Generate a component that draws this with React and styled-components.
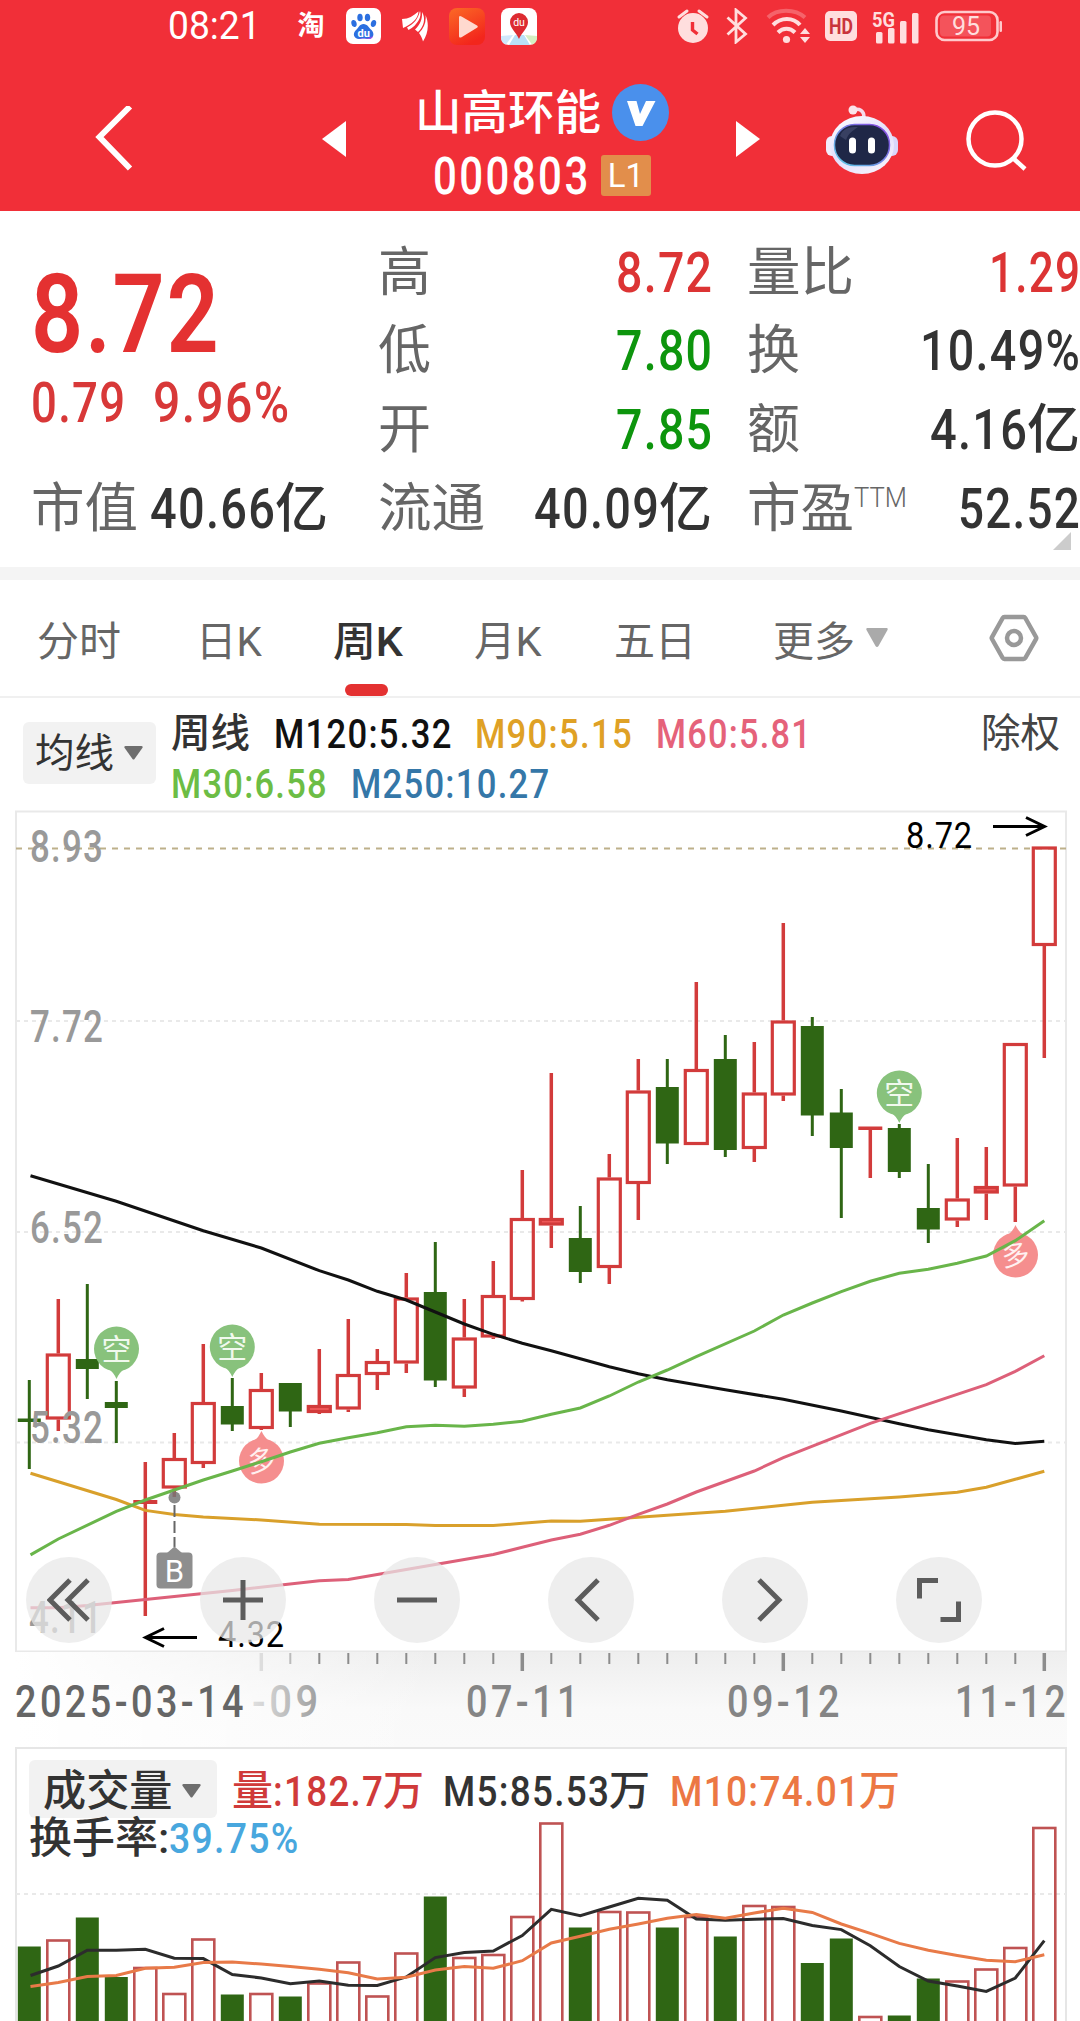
import { useLayoutEffect, useRef } from "react";
import styled, { createGlobalStyle } from "styled-components";

const UP = "#d23b3b";
const DOWN = "#2f6614";
const STEP = 29;
const FIRST_X = 29.3;

const cx = (i) => FIRST_X + i * STEP;

// direction, high, body top, body bottom, low
const candles = [
  ["d", 1380, 1418.5, 1422, 1469],
  ["u", 1299, 1353.5, 1419.5, 1431],
  ["d", 1284, 1359, 1369, 1399],
  ["d", 1381, 1402, 1408, 1443],
  ["u", 1462, 1500, 1504, 1616],
  ["u", 1433, 1458, 1488.5, 1497],
  ["u", 1344, 1402, 1464, 1468],
  ["d", 1378, 1406, 1424.5, 1431],
  ["u", 1373, 1389, 1429, 1430],
  ["d", 1383, 1383, 1411.5, 1427],
  ["u", 1349, 1405, 1413, 1414],
  ["u", 1319, 1374, 1409.5, 1412],
  ["u", 1349, 1361, 1375, 1390],
  ["u", 1273, 1297.5, 1363.5, 1373],
  ["d", 1242, 1292, 1380.5, 1387],
  ["u", 1299, 1337.5, 1388.5, 1397],
  ["u", 1261, 1295, 1337.5, 1339],
  ["u", 1170, 1218, 1300, 1301.5],
  ["u", 1073, 1218, 1225.5, 1248],
  ["d", 1206, 1238, 1272, 1283],
  ["u", 1154, 1177.5, 1268, 1284],
  ["u", 1059, 1090.5, 1184, 1220],
  ["d", 1059, 1087, 1143.5, 1164],
  ["u", 982, 1069, 1145, 1145],
  ["d", 1035, 1059, 1150, 1157],
  ["u", 1042, 1092.5, 1149, 1162],
  ["u", 923, 1020.5, 1095.5, 1101],
  ["d", 1017, 1026, 1115.5, 1136],
  ["d", 1089, 1112.5, 1148, 1218],
  ["u", 1127, 1126.5, 1130, 1178],
  ["d", 1124, 1128, 1172, 1178],
  ["d", 1164, 1208, 1229.5, 1243],
  ["u", 1138, 1198.5, 1220.5, 1227],
  ["u", 1147, 1186, 1193.5, 1220],
  ["u", 1043, 1043, 1186.5, 1222],
  ["u", 847, 846.5, 946, 1058],
];

const ma120 = [
  [0, 1175.7], [3, 1201.3], [6, 1230.7], [8, 1248], [10, 1270.7], [11, 1280],
  [12, 1291.3], [13, 1300], [14, 1312], [15, 1324], [16, 1334.3], [17, 1343.3],
  [18, 1350.7], [19, 1358.7], [20, 1366.7], [21, 1373.7], [22, 1379.7],
  [24, 1389.7], [26, 1399.3], [28, 1411], [30, 1423.7], [31, 1429.7],
  [33, 1439.7], [34, 1443.5], [35, 1441.3],
];

const ma30 = [
  [0, 1554.9], [1, 1539], [3, 1511.4], [4, 1500], [5, 1490], [6, 1480],
  [7, 1471], [8, 1461.7], [9, 1452], [10, 1443.3], [11, 1437.7], [12, 1432.7],
  [13, 1426.7], [14, 1425.3], [15, 1426.3], [16, 1424.3], [17, 1421.3],
  [18, 1414.3], [19, 1408], [20, 1396], [21, 1382], [22, 1370], [23, 1356.7],
  [25, 1331], [26, 1315], [27, 1303], [28, 1291.7], [29, 1281.3],
  [30, 1273.3], [31, 1269.3], [32, 1263.3], [33, 1256], [34, 1240.7],
  [35, 1220.7],
];

const ma90 = [
  [0, 1473.3], [3, 1499.5], [4, 1510.4], [5, 1514.5], [6, 1517], [8, 1520],
  [10, 1524.2], [13, 1524.5], [14, 1525.5], [16, 1525.5], [17, 1523.3],
  [18, 1521], [19, 1521.3], [21, 1517.3], [24, 1511.3], [26, 1505.3],
  [27, 1502.3], [30, 1497], [32, 1492.3], [33, 1487.3], [34, 1479.3],
  [35, 1471.3],
];

const ma60 = [
  [0, 1607.7], [1, 1607.7], [2, 1605.6], [4, 1599.4], [7, 1590.4],
  [10, 1580.8], [11, 1579.4], [12, 1574.6], [16, 1554.5], [17, 1547.3],
  [18, 1540], [19, 1534.3], [20, 1525.3], [21, 1514.3], [22, 1504],
  [23, 1492], [25, 1471], [26, 1457.7], [29, 1423.3], [33, 1384.7],
  [34, 1371.3], [35, 1355.7],
];

// top of every volume bar, in the order of the candles
const volumes = [
  1946.5, 1939.5, 1917.5, 1977, 1967, 1993, 1938.5, 1994.5, 1993, 1996.5,
  1982.5, 1961.5, 1995.5, 1952.5, 1896.5, 1957, 1954, 1916, 1822.5, 1927.5,
  1911, 1911.5, 1927.5, 1916, 1936.5, 1905, 1906, 1963, 1938.5, 2016, 2015.5,
  1978.5, 1980.5, 1968.5, 1947, 1827,
];

const vol5 = [
  1975.5, 1966, 1950.3, 1950.3, 1949.3, 1958.3, 1958.6, 1974.5, 1978, 1983.8,
  1981, 1985.2, 1985.5, 1977, 1957.6, 1952.4, 1951, 1935.5, 1909.3, 1915.8,
  1907, 1898.2, 1900.3, 1919, 1920.3, 1919.3, 1918.6, 1925.5, 1929.6, 1945.8,
  1966.5, 1981, 1986, 1991.4, 1978, 1940.7,
];

const vol10 = [
  1986.6, 1982.4, 1976.6, 1975.5, 1968.3, 1967.2, 1962.4, 1962, 1964, 1966.5,
  1969.3, 1972.8, 1979, 1977.2, 1970, 1966.5, 1968.3, 1960.7, 1943, 1936.2,
  1929.3, 1924, 1918.2, 1914.4, 1918.2, 1913, 1908.2, 1912.4, 1924, 1933.4,
  1943.4, 1950.3, 1955.5, 1960.3, 1961.7, 1954.8,
];

const toPoints = (list) =>
  list.map(([i, y]) => `${i === 0 ? 30.5 : cx(i)},${y}`).join(" ");

// Text squeezed sideways to a given width, for the narrow numerals
const FitText = ({ w, size, weight, color, spacing = 0, children }) => {
  const ref = useRef(null);

  useLayoutEffect(() => {
    const el = ref.current;
    el.style.transform = `scaleX(${w / (el.offsetWidth - spacing)})`;
  }, [w, spacing, children]);

  return (
    <FitBox $w={w} $size={size} $weight={weight} $color={color} $spacing={spacing}>
      <FitInner ref={ref}>{children}</FitInner>
    </FitBox>
  );
};

const ChartText = ({
  x,
  y,
  w,
  size = 43.5,
  fill = "#999",
  weight = 500,
  spacing = 0,
  children,
}) => (
  <text
    x={x}
    y={y}
    textLength={w}
    lengthAdjust="spacingAndGlyphs"
    fontSize={size}
    fontWeight={weight}
    letterSpacing={spacing}
    fill={fill}
  >
    {children}
  </text>
);

const StatusBar = () => (
  <Status>
    <FitText w={93} size={38} weight={400}>08:21</FitText>
    <AppIcons>
      <AppSlot>
        <TaoMark>淘</TaoMark>
      </AppSlot>
      <AppSlot>
        <svg width="35" height="36" viewBox="0 0 35 36">
          <rect width="35" height="36" rx="7" fill="#fff" />
          <g fill="#2b6fe0">
            <ellipse cx="8" cy="15.500" rx="2.600" ry="3.600" transform="rotate(-15 8 15.500)" />
            <ellipse cx="14" cy="9.500" rx="2.700" ry="3.800" />
            <ellipse cx="21.500" cy="9.500" rx="2.700" ry="3.800" />
            <ellipse cx="27.500" cy="15.500" rx="2.600" ry="3.600" transform="rotate(15 27.500 15.500)" />
            <path d="M17.500 16c-4 0-5 4-7.500 6-4 3.500-2 9 3 9 2 0 3-.5 4.500-.5s3 .5 5 .5c5 0 6.500-5.500 3-9-2.500-2-4-6-8-6z" />
          </g>
          <path d="M12 30c5 2 10 1 15-2-1 3-3 3-6 3z" fill="#9a4be8" />
          <text x="17.800" y="28.500" fontSize="11" fontWeight="700" fill="#fff" textAnchor="middle">du</text>
        </svg>
      </AppSlot>
      <AppSlot>
        <svg width="28" height="32" viewBox="0 0 28 32" fill="#fff">
          <path d="M1 9C8 9 12 6 17.500 1.500 17 9 11 14 2 18z" />
          <path d="M19 1c2 5-2 14-11.500 19L6 17.500C13 14 17 9 19 1z" />
          <path d="M21 2c4 6 2 15-4 20l-3-2.500C19 15 21.500 9 21 2z" />
          <path d="M24.500 5c4 9 2.500 19-2.500 26.500-1-3.500-2-6-4-8.500C23 18 25.500 12 24.500 5z" />
        </svg>
      </AppSlot>
      <AppSlot>
        <svg width="36" height="37" viewBox="0 0 36 37">
          <defs>
            <linearGradient id="play" x1="0" y1="0" x2="0.500" y2="1">
              <stop offset="0" stopColor="#fb6a26" />
              <stop offset="1" stopColor="#f3261c" />
            </linearGradient>
          </defs>
          <rect width="36" height="37" rx="8" fill="url(#play)" />
          <path d="M10 9.500c0-1.500 1-2 2.500-1l15.500 9c1 .6 1 1.500 0 2.200l-15.500 9.500c-1.500.8-2.500.3-2.500-1.200z" fill="#ffd9cf" />
        </svg>
      </AppSlot>
      <AppSlot>
        <svg width="36" height="37" viewBox="0 0 36 37">
          <rect width="36" height="37" rx="8" fill="#fff" />
          <path d="M0 28l12-1-7 9.500C2 36 0 33 0 30z" fill="#cfe8fb" />
          <path d="M14 27h9l6 10H8z" fill="#b9e0f7" />
          <path d="M24 27l12 1v2c0 3-2 6-5 6.500z" fill="#d5efc2" />
          <path d="M18 31C15 24 9 20 9 14a9 9 0 0 1 18 0c0 6-6 10-9 17z" fill="#dd2b31" />
          <text x="18" y="18" fontSize="10.500" fill="#fff" textAnchor="middle">du</text>
        </svg>
      </AppSlot>
    </AppIcons>

    <Signals>
      <svg width="34" height="36" viewBox="0 0 34 36">
        <circle cx="17" cy="20" r="15" fill="#ffdede" />
        <path d="M3 9l8-6M31 9l-8-6" stroke="#ffdede" strokeWidth="3" strokeLinecap="round" />
        <path d="M16.500 14v8l5 4" fill="none" stroke="#f12f38" strokeWidth="3.400" />
      </svg>
      <svg width="26" height="36" viewBox="0 0 26 36" fill="none" stroke="#ffdede" strokeWidth="2.800">
        <path d="M3.500 9.500L21.500 26l-9.500 8V2l9.500 8L3.500 26.500" />
      </svg>
      <svg width="47" height="36" viewBox="0 0 47 36" fill="none" strokeWidth="4">
        <path d="M4 9.500c9-9 27-9 37 0" stroke="#f5636a" />
        <path d="M9 17c8-8 20-8 27 0" stroke="#ffdede" />
        <path d="M14 24.500c5-5 12-5 17 0" stroke="#ffdede" />
        <circle cx="22.500" cy="31.500" r="3.600" fill="#ffdede" />
        <path d="M36 26l5-6 5 6zM36 29l5 6 5-6z" fill="#ffdede" />
      </svg>
      <HdMark>
        <FitText w={24} size={22} weight={700}>HD</FitText>
      </HdMark>
      <svg width="50" height="36" viewBox="0 0 50 36" fill="#ffdede">
        <rect x="5" y="24" width="6.500" height="11.500" rx="1.500" />
        <rect x="17" y="20" width="6.500" height="15.500" rx="1.500" />
        <rect x="29" y="13" width="6.500" height="22.500" rx="1.500" />
        <rect x="41" y="5" width="6.500" height="30.500" rx="1.500" />
        <text x="1" y="18.500" fontSize="21" fontWeight="700" textLength="23" lengthAdjust="spacingAndGlyphs">5G</text>
      </svg>
      <svg width="68" height="32" viewBox="0 0 68 32">
        <rect x="1.500" y="2" width="61" height="28" rx="8" fill="none" stroke="#ffc9cb" strokeWidth="2.600" />
        <rect x="5" y="5.500" width="51" height="21" rx="4" fill="#f4535b" />
        <rect x="64.500" y="11" width="2.500" height="11" rx="1.200" fill="#ffc9cb" />
        <text x="31" y="25" fontSize="25" fill="#ffdede" textAnchor="middle">95</text>
      </svg>
    </Signals>
  </Status>
);

const TitleBar = () => (
  <Nav>
    <NavItem $left={95}>
      <svg width="38" height="66" viewBox="0 0 38 66" fill="none" stroke="#fff" strokeWidth="6">
        <path d="M35 0.500L4.500 31 35 62.500" />
      </svg>
    </NavItem>
    <NavItem $left={189}>
      <svg width="24" height="36" viewBox="0 0 24 36">
        <path d="M0 18L24 0v36z" fill="#fff" />
      </svg>
    </NavItem>
    <Titles>
      <NameRow>
        <FitText w={186} size={46.5} weight={500}>山高环能</FitText>
        <VBadge>
          <svg width="30" height="26" viewBox="0 0 30 26">
            <path d="M1 0h9.500l3.500 13L20 0h9.500L16.500 25h-7z" fill="#fff" />
          </svg>
        </VBadge>
      </NameRow>
      <CodeRow>
        <FitText w={155} size={52} weight={500} spacing={3}>000803</FitText>
        <LevelBadge>L1</LevelBadge>
      </CodeRow>
    </Titles>
    <NavItem $left={67}>
      <svg width="24" height="36" viewBox="0 0 24 36">
        <path d="M24 18L0 0v36z" fill="#fff" />
      </svg>
    </NavItem>
    <NavItem $left={65}>
      <svg width="74" height="72" viewBox="0 0 74 72">
        <defs>
          <linearGradient id="shell" x1="0" y1="0" x2="0.600" y2="1">
            <stop offset="0" stopColor="#fff" />
            <stop offset="0.600" stopColor="#e3defb" />
            <stop offset="1" stopColor="#f3effb" />
          </linearGradient>
          <linearGradient id="rim" x1="0" y1="1" x2="1" y2="0">
            <stop offset="0" stopColor="#5ccfe6" />
            <stop offset="1" stopColor="#8a3ee0" />
          </linearGradient>
        </defs>
        <path d="M28 7c7-2 11 1 11 7" fill="none" stroke="#f6d9ea" strokeWidth="3.500" />
        <circle cx="28" cy="7" r="4.500" fill="#fbe3ea" />
        <rect x="1" y="33" width="12" height="20" rx="6" fill="#f2ecfc" />
        <rect x="61" y="33" width="12" height="20" rx="6" fill="#d9d6fa" />
        <ellipse cx="37" cy="42" rx="32" ry="29" fill="url(#shell)" />
        <rect x="9.500" y="21.500" width="55" height="41" rx="20" fill="#1f2747" stroke="url(#rim)" strokeWidth="1.500" />
        <path d="M15 33c3-8 9-9 18-9-6 4-10 7-12 13z" fill="#4a5174" opacity="0.600" />
        <rect x="24" y="34.500" width="7" height="16" rx="3.500" fill="#fff" />
        <rect x="43" y="34.500" width="7" height="16" rx="3.500" fill="#fff" />
      </svg>
    </NavItem>
    <NavItem $left={66}>
      <svg width="62" height="64" viewBox="0 0 62 64" fill="none" stroke="#fff" strokeWidth="4.500">
        <circle cx="30" cy="32" r="26.500" />
        <path d="M48.500 51.500L60 62" />
      </svg>
    </NavItem>
  </Nav>
);

const Value = ({ w, color = "#333", unit, children }) => (
  <ValueBox>
    <FitText w={w} size={55} weight={500} color={color} spacing={1.5}>{children}</FitText>
    {unit && <FitText w={53} size={53} weight={500} color={color}>{unit}</FitText>}
  </ValueBox>
);

const Label = ({ w = 53, children }) => (
  <FitText w={w} size={53} weight={400} color="#666">{children}</FitText>
);

const QuotePanel = () => (
  <Quote>
    <PriceBlock>
      <Price>
        <FitText w={188} size={108.500} weight={600} spacing={2}>8.72</FitText>
      </Price>
      <Change>
        <FitText w={94} size={55} weight={500} spacing={1.5}>0.79</FitText>
        <FitText w={136} size={55} weight={500} spacing={1.5}>9.96%</FitText>
      </Change>
    </PriceBlock>
    <Stat $w={334}>
      <Label>高</Label>
      <Value w={96} color="#dc3434">8.72</Value>
    </Stat>
    <Stat $w={333}>
      <Label w={107}>量比</Label>
      <Value w={91} color="#dc3434">1.29</Value>
    </Stat>
    <Stat $w={334}>
      <Label>低</Label>
      <Value w={96} color="#0d950d">7.80</Value>
    </Stat>
    <Stat $w={333}>
      <Label>换</Label>
      <Value w={160}>10.49%</Value>
    </Stat>
    <Stat $w={334}>
      <Label>开</Label>
      <Value w={96} color="#0d950d">7.85</Value>
    </Stat>
    <Stat $w={333}>
      <Label>额</Label>
      <Value w={97} unit="亿">4.16</Value>
    </Stat>
    <Stat $w={297}>
      <Label w={107}>市值</Label>
      <Value w={125} unit="亿">40.66</Value>
    </Stat>
    <Stat $w={334}>
      <Label w={107}>流通</Label>
      <Value w={125} unit="亿">40.09</Value>
    </Stat>
    <Stat $w={333}>
      <PeLabel>
        <Label w={107}>市盈</Label>
        <Ttm>
          <FitText w={53} size={28} weight={300} color="#666">TTM</FitText>
        </Ttm>
      </PeLabel>
      <Value w={122}>52.52</Value>
    </Stat>
    <Corner />
  </Quote>
);

const tabs = [
  { name: "分时", w: 84, left: 37 },
  { name: "日K", w: 66, left: 75 },
  { name: "周K", w: 70, left: 71, active: true },
  { name: "月K", w: 68, left: 71 },
  { name: "五日", w: 82, left: 72 },
  { name: "更多", w: 82, left: 77 },
];

const PeriodTabs = () => (
  <Tabs>
    {tabs.map((tab) => (
      <Tab key={tab.name} $left={tab.left} $active={tab.active}>
        <TabText>
          <FitText w={tab.w} size={41} weight={tab.active ? 500 : 400}>{tab.name}</FitText>
        </TabText>
        {tab.active && <TabLine />}
      </Tab>
    ))}
    <MoreArrow width="22" height="19" viewBox="0 0 22 19">
      <path d="M1.500 0h19c1 0 1.500 1 1 2L12.500 18c-.8 1.200-2.200 1.200-3 0L.5 2C0 1 .5 0 1.500 0z" fill="#aaa" />
    </MoreArrow>
    <Settings width="50" height="48" viewBox="0 0 50 48" fill="none" stroke="#999" strokeWidth="4.500">
      <path d="M15.500 3h19a2 2 0 0 1 1.800 1L47 23a2 2 0 0 1 0 2L36.300 44a2 2 0 0 1-1.800 1h-19a2 2 0 0 1-1.800-1L3 25a2 2 0 0 1 0-2L13.700 4a2 2 0 0 1 1.800-1z" />
      <circle cx="25" cy="24" r="7" />
    </Settings>
  </Tabs>
);

const Caret = () => (
  <svg width="19" height="14" viewBox="0 0 19 14">
    <path d="M1.500 0h16c1 0 1.500 1 1 1.800L10.500 13c-.6.800-1.400.8-2 0L.5 1.800C0 1 .5 0 1.500 0z" fill="#6e6e6e" />
  </svg>
);

const Averages = () => (
  <AverageBar>
    <AverageButton>
      <FitText w={79} size={39.500} weight={400} color="#333">均线</FitText>
      <Caret />
    </AverageButton>
    <Legend>
      <LegendRow>
        <FitText w={79} size={40} weight={500} color="#333">周线</FitText>
        <FitText w={177} size={41} weight={500} color="#111" spacing={1.5}>M120:5.32</FitText>
        <FitText w={157} size={41} weight={500} color="#dfa125" spacing={1.5}>M90:5.15</FitText>
        <FitText w={155} size={41} weight={500} color="#e5627a" spacing={1.5}>M60:5.81</FitText>
      </LegendRow>
      <LegendRow>
        <FitText w={156} size={41} weight={500} color="#6cbd45" spacing={1.5}>M30:6.58</FitText>
        <FitText w={198} size={41} weight={500} color="#3577a8" spacing={1.5}>M250:10.27</FitText>
      </LegendRow>
    </Legend>
    <Adjust>
      <FitText w={79} size={39.500} weight={400} color="#444">除权</FitText>
    </Adjust>
  </AverageBar>
);

const Candle = ({ i, data }) => {
  const [dir, high, top, bottom, low] = data;
  const x = cx(i);

  if (dir === "d") {
    return (
      <g fill={DOWN}>
        <rect x={x - 1.500} y={high} width="3" height={low - high} />
        <rect x={x - 11.500} y={top} width="23" height={bottom - top} />
      </g>
    );
  }

  const h = bottom - top;
  return (
    <g fill={UP}>
      <rect x={x - 1.750} y={high} width="3.500" height={Math.max(top - high, 0)} />
      <rect x={x - 1.750} y={bottom} width="3.500" height={Math.max(low - bottom, 0)} />
      {h < 5 ? (
        <rect x={x - 12} y={top} width="24" height={h} />
      ) : (
        <rect
          x={x - 11}
          y={top + 1.500}
          width="22"
          height={h - 3}
          fill={h < 9 ? "#f05a5a" : "none"}
          stroke={UP}
          strokeWidth="3.200"
        />
      )}
    </g>
  );
};

const ShortPin = ({ x, y }) => (
  <g transform={`translate(${x} ${y})`}>
    <path d="M-9 19Q-3 23 0 30Q3 23 9 19z" fill="#88c27c" />
    <circle r="22.500" fill="#88c27c" />
    <text y="11" fontSize="30" fill="#f1f9ee" textAnchor="middle">空</text>
  </g>
);

const LongPin = ({ x, y }) => (
  <g transform={`translate(${x} ${y})`}>
    <path d="M-9-19Q-3-23 0-30Q3-23 9-19z" fill="#f58e8e" />
    <circle r="22.500" fill="#f58e8e" />
    <text y="10" fontSize="28" fill="#fff0f0" textAnchor="middle" transform="rotate(-8)">多</text>
  </g>
);

const KLineChart = () => (
  <ChartArea>
    <ChartSvg width="1080" height="842" viewBox="0 810 1080 842">
      <rect x="16" y="811.500" width="1050" height="840" fill="none" stroke="#e9e9e9" strokeWidth="2" />
      {[1021, 1232, 1442.500].map((y) => (
        <line key={y} x1="16" x2="1066" y1={y} y2={y} stroke="#e9e9e9" strokeWidth="2" strokeDasharray="4 4" />
      ))}
      <line x1="16" x2="1066" y1="848.500" y2="848.500" stroke="#bdb08a" strokeWidth="2" strokeDasharray="6 6" />

      {candles.map((c, i) => (
        <Candle key={i} i={i} data={c} />
      ))}

      <ShortPin x={116.500} y={1349} />
      <ShortPin x={232.300} y={1347} />
      <ShortPin x={899.300} y={1093} />
      <LongPin x={261.500} y={1461} />
      <LongPin x={1015.500} y={1255} />

      <g fill="none" strokeWidth="3">
        <polyline points={toPoints(ma120)} stroke="#111" />
        <polyline points={toPoints(ma90)} stroke="#d9a02b" />
        <polyline points={toPoints(ma60)} stroke="#dd6079" />
        <polyline points={toPoints(ma30)} stroke="#69b54a" />
      </g>

      <circle cx="174.500" cy="1497.500" r="6" fill="#777" fillOpacity="0.850" />
      <line x1="174.500" x2="174.500" y1="1505" y2="1547" stroke="#666" strokeWidth="2" strokeDasharray="12 4" />
      <path d="M167 1553l7.500-6.500 7.500 6.500z" fill="#8e8e8e" />
      <rect x="156.500" y="1552.500" width="36" height="36" rx="4" fill="#8e8e8e" />
      <text x="174.500" y="1581.500" fontSize="31" fill="#fff" textAnchor="middle">B</text>

      <ChartText x={30} y={862} w={74} spacing={1.5}>8.93</ChartText>
      <ChartText x={30} y={1041.500} w={74} spacing={1.5}>7.72</ChartText>
      <ChartText x={30} y={1242.500} w={74} spacing={1.5}>6.52</ChartText>
      <ChartText x={30} y={1443} w={74} spacing={1.5}>5.32</ChartText>
      <ChartText x={29} y={1632.500} w={74} spacing={1.5}>4.11</ChartText>

      <ChartText x={906} y={848} w={67} size={37.500} weight={400} fill="#000" spacing={1}>8.72</ChartText>
      <path d="M993 826.500h51M1026 817.500l18.500 9-18.500 9" fill="none" stroke="#000" strokeWidth="3" />
      <ChartText x={218} y={1647} w={67} size={37.500} weight={400} fill="#000" spacing={1}>4.32</ChartText>
      <path d="M197 1637.500h-51M164 1628.500l-18.500 9 18.500 9" fill="none" stroke="#000" strokeWidth="3" />
    </ChartSvg>
    <Controls>
      <RoundButton>
        <svg width="44" height="44" viewBox="0 0 44 44">
          <path d="M23 2L3 22l20 20M41 2L21 22l20 20" />
        </svg>
      </RoundButton>
      <RoundButton>
        <svg width="44" height="44" viewBox="0 0 44 44">
          <path d="M22 2v40M2 22h40" />
        </svg>
      </RoundButton>
      <RoundButton>
        <svg width="44" height="44" viewBox="0 0 44 44">
          <path d="M2 22h40" />
        </svg>
      </RoundButton>
      <RoundButton>
        <svg width="44" height="44" viewBox="0 0 44 44">
          <path d="M29 2L9 22l20 20" />
        </svg>
      </RoundButton>
      <RoundButton>
        <svg width="44" height="44" viewBox="0 0 44 44">
          <path d="M16 2l20 20-20 20" />
        </svg>
      </RoundButton>
      <RoundButton>
        <svg width="44" height="44" viewBox="0 0 44 44">
          <path d="M2.500 20.500V2.500H21M23.500 41.500H41.500V23.500" />
        </svg>
      </RoundButton>
    </Controls>
  </ChartArea>
);

const DateAxis = () => (
  <Axis width="1080" height="95" viewBox="0 1652 1080 95">
    <defs>
      <linearGradient id="shade" x1="0" y1="0" x2="0" y2="1">
        <stop offset="0" stopColor="#eeeeee" />
        <stop offset="0.600" stopColor="#f9f9f9" />
        <stop offset="1" stopColor="#fafafa" />
      </linearGradient>
      <linearGradient id="cover" x1="0" y1="0" x2="1" y2="0">
        <stop offset="0" stopColor="#fff" />
        <stop offset="0.200" stopColor="#fff" stopOpacity="0.800" />
        <stop offset="1" stopColor="#fff" stopOpacity="0" />
      </linearGradient>
      <linearGradient id="fade" gradientUnits="userSpaceOnUse" x1="250" y1="0" x2="325" y2="0">
        <stop offset="0" stopColor="#e2e2e2" />
        <stop offset="1" stopColor="#999" />
      </linearGradient>
    </defs>
    <rect x="16" y="1652" width="1051" height="95" fill="url(#shade)" />
    <rect x="16" y="1652" width="420" height="95" fill="url(#cover)" />
    {candles.map((_, i) => {
      if (i < 8) return null;
      const major = (i - 8) % 9 === 0;
      const w = major ? 3.500 : 2;
      return (
        <rect
          key={i}
          x={cx(i) - w / 2}
          y="1653"
          width={w}
          height={major ? 18 : 11}
          fill={i === 8 ? "#ddd" : i === 9 ? "#bbb" : "#8c8c8c"}
        />
      );
    })}
    <ChartText x={15} y={1717} w={232} fill="#666" spacing={4}>2025-03-14</ChartText>
    <ChartText x={252} y={1717} w={70} fill="url(#fade)" spacing={4}>-09</ChartText>
    <ChartText x={466} y={1717} w={116} fill="#858585" spacing={4}>07-11</ChartText>
    <ChartText x={727} y={1717} w={116} fill="#858585" spacing={4}>09-12</ChartText>
    <ChartText x={955} y={1717} w={114} fill="#858585" spacing={4}>11-12</ChartText>
  </Axis>
);

const VolumePanel = () => (
  <Volume>
    <VolumeSvg width="1080" height="274" viewBox="0 1747 1080 274">
      <path d="M16 2021V1748H1066V2021" fill="none" stroke="#e6e6e6" strokeWidth="2" />
      <line x1="16" x2="1066" y1="1894" y2="1894" stroke="#e9e9e9" strokeWidth="2" strokeDasharray="4 4" />
      {volumes.map((top, i) =>
        candles[i][0] === "d" ? (
          <rect key={i} x={cx(i) - 11.500} y={top} width="23" height="220" fill={DOWN} />
        ) : (
          <rect
            key={i}
            x={cx(i) - 11}
            y={top + 1}
            width="22"
            height="220"
            fill="none"
            stroke="#bf5353"
            strokeWidth="2.600"
          />
        )
      )}
      <g fill="none" strokeWidth="3">
        <polyline points={toPoints(vol5.map((y, i) => [i, y]))} stroke="#2c2c2c" />
        <polyline points={toPoints(vol10.map((y, i) => [i, y]))} stroke="#e87a48" />
      </g>
    </VolumeSvg>
    <VolumeHead>
      <VolumeRow>
        <VolumeButton>
          <FitText w={130} size={43.500} weight={500} color="#333">成交量</FitText>
          <Caret />
        </VolumeButton>
        <VolumeItem $left={15}>
          <FitText w={41} size={41} weight={500} color="#d03a3a">量</FitText>
          <FitText w={110} size={43} weight={500} color="#d03a3a" spacing={1.5}>:182.7</FitText>
          <FitText w={41} size={41} weight={500} color="#d03a3a">万</FitText>
        </VolumeItem>
        <VolumeItem $left={19}>
          <FitText w={166} size={43} weight={500} color="#333" spacing={1.5}>M5:85.53</FitText>
          <FitText w={41} size={41} weight={500} color="#333">万</FitText>
        </VolumeItem>
        <VolumeItem $left={20}>
          <FitText w={189} size={43} weight={500} color="#ec7743" spacing={1.5}>M10:74.01</FitText>
          <FitText w={41} size={41} weight={500} color="#ec7743">万</FitText>
        </VolumeItem>
      </VolumeRow>
      <TurnoverRow>
        <FitText w={129} size={43} weight={500} color="#333">换手率</FitText>
        <FitText w={11} size={43} weight={500} color="#333">:</FitText>
        <FitText w={129} size={43} weight={500} color="#48a7de" spacing={1.5}>39.75%</FitText>
      </TurnoverRow>
    </VolumeHead>
  </Volume>
);

const App = () => {
  return (
    <>
      <GlobalStyle />
      <Page>
        <Top>
          <StatusBar />
          <TitleBar />
        </Top>
        <QuotePanel />
        <Divider />
        <PeriodTabs />
        <Averages />
        <KLineChart />
        <DateAxis />
        <VolumePanel />
      </Page>
    </>
  );
};

const GlobalStyle = createGlobalStyle`
  * {
    box-sizing: border-box;
  }

  body {
    margin: 0;
    overflow: hidden;
    background: #fff;
    font-family: Roboto, "Noto Sans CJK SC", sans-serif;
  }

  svg {
    display: block;
    flex-shrink: 0;
  }
`;

const Page = styled.main`
  display: flex;
  flex-direction: column;
  width: 1080px;
  height: 2021px;
  overflow: hidden;
  background: #fff;
`;

const FitBox = styled.span`
  display: block;
  flex-shrink: 0;
  width: ${({ $w }) => $w}px;
  padding-top: 0.06em;
  font-size: ${({ $size }) => $size}px;
  font-weight: ${({ $weight }) => $weight};
  color: ${({ $color }) => $color || "inherit"};
  letter-spacing: ${({ $spacing }) => $spacing}px;
  line-height: 1.1;
  white-space: nowrap;
`;

const FitInner = styled.span`
  display: inline-block;
  transform-origin: left center;
`;

/* Header */
const Top = styled.header`
  height: 211px;
  flex-shrink: 0;
  background: #f12f38;
  color: #fff;
`;

const Status = styled.div`
  display: flex;
  align-items: center;
  height: 52px;
  padding-left: 168px;
`;

const AppIcons = styled.div`
  display: flex;
  margin-left: 24px;
`;

const AppSlot = styled.div`
  display: flex;
  align-items: center;
  justify-content: center;
  width: 52px;
`;

const TaoMark = styled.span`
  font-size: 27px;
  font-weight: 700;
  line-height: 36px;
`;

const Signals = styled.div`
  display: flex;
  align-items: center;
  gap: 14px;
  margin-left: 131px;
`;

const HdMark = styled.span`
  display: flex;
  align-items: center;
  justify-content: center;
  width: 32px;
  height: 30px;
  border-radius: 5px;
  background: #ffdede;
  color: #c9343c;
`;

const Nav = styled.nav`
  display: flex;
  align-items: center;
  height: 159px;
  padding-top: 14px;
`;

const NavItem = styled.div`
  margin-left: ${({ $left }) => $left}px;
`;

const Titles = styled.div`
  width: 254px;
  margin-left: 69px;
`;

const NameRow = styled.div`
  display: flex;
  align-items: center;
  justify-content: center;
  gap: 11px;
  height: 74px;
`;

const CodeRow = styled.div`
  display: flex;
  align-items: center;
  justify-content: center;
  gap: 13px;
  height: 53px;
`;

const VBadge = styled.span`
  display: flex;
  align-items: center;
  justify-content: center;
  width: 57px;
  height: 57px;
  padding-top: 4px;
  border-radius: 50%;
  background: #4a90ec;
`;

const LevelBadge = styled.span`
  width: 50px;
  height: 41px;
  border-radius: 3px;
  background: #e28e4b;
  font-size: 33px;
  font-weight: 400;
  line-height: 41px;
  text-align: center;
`;

/* Quote */
const Quote = styled.section`
  position: relative;
  display: grid;
  grid-template-columns: 347px 369px 333px;
  grid-template-rows: repeat(4, 78.7px);
  height: 356px;
  flex-shrink: 0;
  padding: 21px 0 0 31px;
`;

const PriceBlock = styled.div`
  grid-row: 1 / 4;
  color: #e43131;
`;

const Price = styled.div`
  display: flex;
  align-items: center;
  height: 122px;
  margin-top: 18px;
`;

const Change = styled.div`
  display: flex;
  align-items: center;
  gap: 28px;
  height: 60px;
  color: #d83838;
`;

const Stat = styled.div`
  display: flex;
  align-items: center;
  justify-content: space-between;
  width: ${({ $w }) => $w}px;
`;

const ValueBox = styled.div`
  display: flex;
  align-items: center;
`;

const PeLabel = styled.div`
  display: flex;
`;

const Ttm = styled.div`
  padding-top: 5px;
`;

const Corner = styled.i`
  position: absolute;
  right: 9px;
  bottom: 17px;
  border-style: solid;
  border-width: 0 0 18px 18px;
  border-color: transparent transparent #ccc transparent;
`;

const Divider = styled.div`
  height: 13px;
  flex-shrink: 0;
  background: #f4f4f4;
`;

/* Tabs */
const Tabs = styled.div`
  display: flex;
  height: 118px;
  flex-shrink: 0;
  border-bottom: 2px solid #f0f0f0;
`;

const Tab = styled.div`
  margin-left: ${({ $left }) => $left}px;
  padding-top: 18px;
  color: ${({ $active }) => ($active ? "#333" : "#666")};
`;

const TabText = styled.div`
  display: flex;
  align-items: center;
  height: 86px;
`;

const TabLine = styled.div`
  width: 43px;
  height: 12px;
  margin-left: 12px;
  border-radius: 6px;
  background: #e43131;
`;

const MoreArrow = styled.svg`
  margin: 48px 0 0 11px;
`;

const Settings = styled.svg`
  margin: 34px 0 0 101px;
`;

/* Moving averages */
const AverageBar = styled.div`
  display: flex;
  height: 112px;
  flex-shrink: 0;
`;

const AverageButton = styled.div`
  display: flex;
  align-items: center;
  gap: 10px;
  width: 133px;
  height: 62px;
  margin: 24px 0 0 23px;
  padding-left: 12px;
  border-radius: 6px;
  background: #f2f2f2;
`;

const Legend = styled.div`
  margin-left: 15px;
  padding-top: 10px;
`;

const LegendRow = styled.div`
  display: flex;
  align-items: center;
  gap: 24px;
  height: 50px;
`;

const Adjust = styled.div`
  display: flex;
  align-items: center;
  height: 50px;
  margin: 10px 20px 0 auto;
`;

/* Chart */
const ChartArea = styled.section`
  display: grid;
  height: 842px;
  flex-shrink: 0;
`;

const ChartSvg = styled.svg`
  grid-area: 1 / 1;
`;

const Controls = styled.div`
  display: flex;
  grid-area: 1 / 1;
  align-self: end;
  gap: 88px;
  padding: 0 0 9px 26px;
`;

const RoundButton = styled.div`
  display: flex;
  align-items: center;
  justify-content: center;
  width: 86px;
  height: 86px;
  border-radius: 50%;
  background: rgba(232, 232, 232, 0.72);

  path {
    fill: none;
    stroke: #5c5c5c;
    stroke-width: 5;
  }
`;

const Axis = styled.svg`
  flex-shrink: 0;
`;

/* Volume */
const Volume = styled.section`
  display: grid;
  height: 274px;
  flex-shrink: 0;
`;

const VolumeSvg = styled.svg`
  grid-area: 1 / 1;
`;

const VolumeHead = styled.div`
  grid-area: 1 / 1;
  padding: 13px 0 0 29px;
`;

const VolumeRow = styled.div`
  display: flex;
  align-items: center;
  height: 58px;
`;

const VolumeButton = styled.div`
  display: flex;
  align-items: center;
  gap: 9px;
  width: 188px;
  height: 58px;
  padding: 3px 0 0 14px;
  border-radius: 6px;
  background: #f2f2f2;
`;

const VolumeItem = styled.div`
  display: flex;
  align-items: center;
  margin-left: ${({ $left }) => $left}px;
  padding-top: 3px;
`;

const TurnoverRow = styled.div`
  display: flex;
  align-items: center;
  height: 38px;
`;

export default App;
